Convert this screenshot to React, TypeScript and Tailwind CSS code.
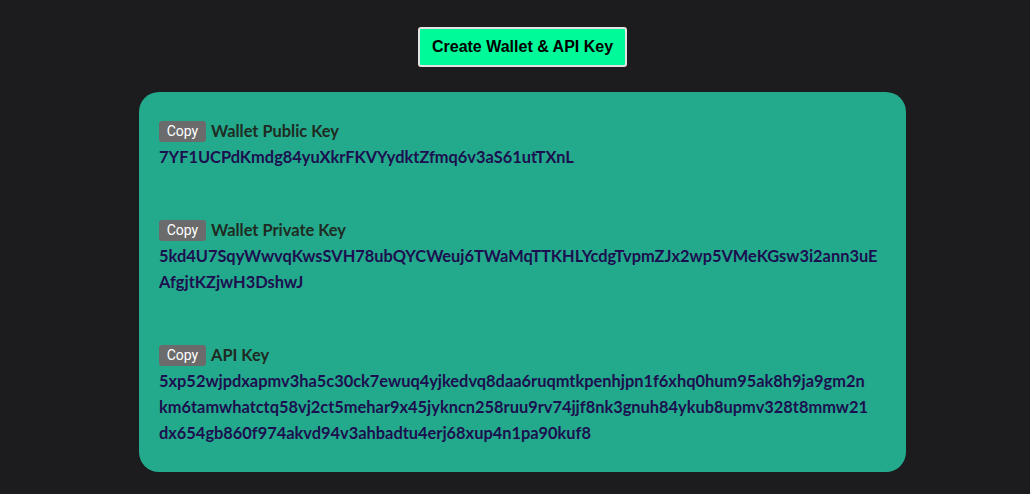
import React from 'react';

type KeyEntry = {
  label: string;
  lines: string[];
};

const keys: KeyEntry[] = [
  {
    label: 'Wallet Public Key',
    lines: ['7YF1UCPdKmdg84yuXkrFKVYydktZfmq6v3aS61utTXnL'],
  },
  {
    label: 'Wallet Private Key',
    lines: [
      '5kd4U7SqyWwvqKwsSVH78ubQYCWeuj6TWaMqTTKHLYcdgTvpmZJx2wp5VMeKGsw3i2ann3uE',
      'AfgjtKZjwH3DshwJ',
    ],
  },
  {
    label: 'API Key',
    lines: [
      '5xp52wjpdxapmv3ha5c30ck7ewuq4yjkedvq8daa6ruqmtkpenhjpn1f6xhq0hum95ak8h9ja9gm2n',
      'km6tamwhatctq58vj2ct5mehar9x45jykncn258ruu9rv74jjf8nk3gnuh84ykub8upmv328t8mmw21',
      'dx654gb860f974akvd94v3ahbadtu4erj68xup4n1pa90kuf8',
    ],
  },
];

function KeyBlock({ entry }: { entry: KeyEntry }) {
  return (
    <div>
      <div className="flex items-center gap-[5px] h-[26px]">
        <button className="h-[21px] w-[47px] bg-[#6b6b6b] text-white text-[14px] rounded-[3px] font-['Roboto',sans-serif] leading-none">
          Copy
        </button>
        <span className="text-[#1f2b22] font-bold">{entry.label}</span>
      </div>
      {entry.lines.map((line) => (
        <div key={line} className="text-[#1c0f4f] font-bold leading-[26px] whitespace-nowrap">
          {line}
        </div>
      ))}
    </div>
  );
}

export default function App() {
  return (
    <div className="min-h-screen bg-[#1c1b1d] font-['Lato',sans-serif] text-[16.4px]">
      <div className="flex flex-col items-center pl-[15px] pt-[27px]">
        <button className="h-[40px] w-[209px] bg-[#00fa9a] border-2 border-[#e2e2e2] rounded-[3px] text-black font-bold font-['Liberation_Sans',Arial,sans-serif] text-[16px]">
          Create Wallet &amp; API Key
        </button>

        <div className="mt-[25px] w-[767px] bg-[#23aa8c] rounded-[20px] pt-[26px] pb-[26px] px-[20px] flex flex-col gap-[47px]">
          {keys.map((entry) => (
            <KeyBlock key={entry.label} entry={entry} />
          ))}
        </div>
      </div>
    </div>
  );
}
